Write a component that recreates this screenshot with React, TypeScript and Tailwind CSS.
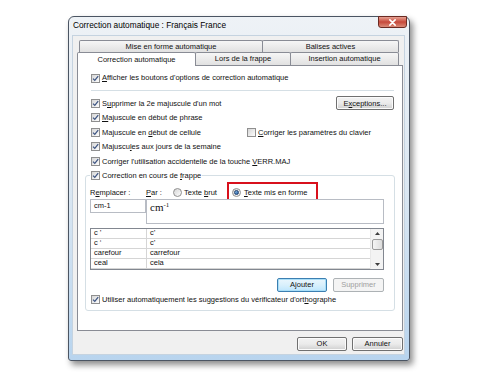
import React from "react";

const U = ({ children }: { children: React.ReactNode }) => (
  <span className="underline decoration-[0.5px] underline-offset-[1px]">{children}</span>
);

function Box({ checked = true }: { checked?: boolean }) {
  return (
    <span className="flex h-[9px] w-[9px] shrink-0 items-center justify-center border border-[#8f8f8f] bg-gradient-to-br from-[#d6d6d6] to-[#fdfdfd]">
      {checked && (
        <svg viewBox="0 0 7 7" className="h-[7px] w-[7px]">
          <path d="M1 3.6 L2.8 5.4 L6.2 1.2" stroke="#3f5683" strokeWidth="1.3" fill="none" />
        </svg>
      )}
    </span>
  );
}

function Check({ checked = true, children }: { checked?: boolean; children: React.ReactNode }) {
  return (
    <span className="flex items-center gap-[2px] whitespace-nowrap">
      <Box checked={checked} />
      <span>{children}</span>
    </span>
  );
}

function Radio({ on = false }: { on?: boolean }) {
  return (
    <span className="flex h-[9px] w-[9px] shrink-0 items-center justify-center rounded-full border border-[#8f8f8f] bg-gradient-to-br from-[#d6d6d6] to-[#fdfdfd]">
      {on && <span className="h-[5px] w-[5px] rounded-full border border-[#1d3f70] bg-gradient-to-br from-[#8fc0ea] to-[#1f5c9e]" />}
    </span>
  );
}

function Btn({
  children,
  w,
  kind = "normal",
}: {
  children: React.ReactNode;
  w: string;
  kind?: "normal" | "default" | "disabled";
}) {
  const base = "flex h-[14px] items-center justify-center rounded-[2px] border";
  const cls =
    kind === "default"
      ? "border-[#3c7fb1] bg-gradient-to-b from-[#eaf6fd] via-[#d9f0fc] to-[#bee6fd] shadow-[inset_0_0_0_1px_#a8def8]"
      : kind === "disabled"
      ? "border-[#adb2b5] bg-[#f4f4f4] text-[#a0a0a0]"
      : "border-[#707070] bg-gradient-to-b from-[#f2f2f2] via-[#ebebeb] to-[#cfcfcf] shadow-[inset_0_0_0_1px_#fbfbfb]";
  return <div className={`${base} ${cls} ${w}`}>{children}</div>;
}

function Tab({ children, w, selected = false, h }: { children: React.ReactNode; w: string; selected?: boolean; h: string }) {
  return (
    <div
      className={`-ml-px flex shrink-0 items-center justify-center rounded-t-[2px] border border-b-0 border-[#898c95] first:ml-0 ${w} ${h} ${
        selected ? "relative z-10 bg-white" : "bg-gradient-to-b from-[#f6f6f6] to-[#e1e1e1]"
      }`}
    >
      {children}
    </div>
  );
}

const rows: [string, string][] = [
  ["c \u2019", "c\u2019"],
  ["c \u2018", "c\u2019"],
  ["carefour", "carrefour"],
  ["ceal", "cela"],
];

export default function App() {
  return (
    <div className="h-[375px] w-[500px] bg-white pl-[68px] pt-[16px] font-['Segoe_UI','Liberation_Sans',Arial,sans-serif] text-[7.5px] leading-none text-[#111]">
      <div className="flex h-[345px] w-[342px] flex-col rounded-t-[6px] rounded-b-[3px] border border-[#4b5563] bg-gradient-to-b from-[#eef2f6] via-[#dbe7f2] to-[#b8d4ee] shadow-[3px_4px_6px_rgba(0,0,0,0.45)]">
        {/* title bar */}
        <div className="flex h-[18px] items-start justify-between pl-[4px] pr-[2px]">
          <span className="mt-[4px] text-[8.3px] text-[#000]">Correction automatique : Français France</span>
          <div className="-mt-px flex h-[12px] w-[29px] items-center justify-center rounded-b-[3px] border border-[#6a2a22] bg-gradient-to-b from-[#e6a193] via-[#c5473a] to-[#d98a78]">
            <svg viewBox="0 0 10 8" className="h-[7px] w-[9px]">
              <path d="M2 1 L8 7 M8 1 L2 7" stroke="#fff" strokeWidth="1.8" strokeLinecap="round" />
            </svg>
          </div>
        </div>

        {/* client */}
        <div className="ml-[3px] flex h-[320px] w-[333px] flex-col border border-[#c5d3e0] bg-[#f0f0f0]">
          <div className="ml-[4px] mt-[4px] w-[326px]">
            <div className="flex h-[12px] pl-[2px]">
              <Tab w="w-[184px]" h="h-[12px]">Mise en forme automatique</Tab>
              <Tab w="w-[137px]" h="h-[12px]">Balises actives</Tab>
            </div>
            <div className="flex h-[13px] items-start">
              <Tab w="w-[119px]" h="h-[14px]" selected>
                Correction automatique
              </Tab>
              <Tab w="w-[96px]" h="h-[13px]">Lors de la frappe</Tab>
              <Tab w="w-[109px]" h="h-[13px]">Insertion automatique</Tab>
            </div>

            {/* panel */}
            <div className="h-[266px] border border-[#898c95] bg-white pl-[13px] pt-[5px]">
              <div className="flex h-[14px] items-center">
                <Check>
                  <U>A</U>fficher les boutons d'options de correction automatique
                </Check>
              </div>
              <div className="mt-[5px] h-px w-[303px] bg-[#d5dfe5]" />
              <div className="mt-[5px]">
                <div className="flex h-[14.5px] w-[303px] items-center justify-between">
                  <Check>
                    S<U>u</U>pprimer la 2e majuscule d'un mot
                  </Check>
                  <Btn w="w-[58px]">
                    E<U>x</U>ceptions...
                  </Btn>
                </div>
                <div className="flex h-[14.5px] items-center">
                  <Check>
                    <U>M</U>ajuscule en début de phrase
                  </Check>
                </div>
                <div className="flex h-[14.5px] items-center">
                  <div className="w-[156px] shrink-0">
                    <Check>
                      Majuscule en <U>d</U>ébut de cellule
                    </Check>
                  </div>
                  <Check checked={false}>
                    <U>C</U>orriger les paramètres du clavier
                  </Check>
                </div>
                <div className="flex h-[14.5px] items-center">
                  <Check>
                    Majuscu<U>l</U>es aux jours de la semaine
                  </Check>
                </div>
                <div className="flex h-[14.5px] items-center">
                  <Check>
                    Corriger l'utilisation accidentelle de la touche <U>V</U>ERR.MAJ
                  </Check>
                </div>
              </div>

              <fieldset className="-ml-[6px] h-[142px] w-[310px] rounded-[3px] border border-[#d5dfe5] pl-[4px]">
                <legend className="flex h-[14px] items-center px-[1px]">
                  <Check>
                    Correction en cours de <U>f</U>rappe
                  </Check>
                </legend>

                <div className="mt-[4px] flex h-[12px] items-center">
                  <span className="w-[56px] shrink-0">
                    R<U>e</U>mplacer :
                  </span>
                  <span className="w-[27px] shrink-0">
                    <U>P</U>ar :
                  </span>
                  <span className="flex w-[54px] shrink-0 items-center gap-[2px]">
                    <Radio />
                    <span>
                      Texte <U>b</U>rut
                    </span>
                  </span>
                  <span className="flex h-[21px] w-[91px] shrink-0 items-center gap-[3px] border-2 border-[#d8101c] pl-[3px]">
                    <Radio on />
                    <span>
                      <U>T</U>exte mis en forme
                    </span>
                  </span>
                </div>

                <div className="flex h-[25px] items-start">
                  <div className="flex h-[14px] w-[56px] items-center border border-[#b8bcc4] bg-white pl-[3px]">cm-1</div>
                  <div className="ml-0 h-[25px] w-[238px] border border-[#b8bcc4] bg-white pl-[3px] pt-[2px] font-['Liberation_Serif',serif] text-[11px]">
                    cm<sup className="text-[7px]">-1</sup>
                  </div>
                </div>

                <div className="mt-[4px] flex h-[42px] w-[294px] border border-[#828790] bg-white">
                  <div className="flex flex-1 flex-col">
                    {rows.map(([a, b]) => (
                      <div key={a} className="flex h-[10px] border-b border-[#d5d5d5]">
                        <span className="flex w-[56px] shrink-0 items-center border-r border-[#d5d5d5] pl-[3px]">{a}</span>
                        <span className="flex items-center pl-[3px]">{b}</span>
                      </div>
                    ))}
                  </div>
                  <div className="flex w-[13px] flex-col items-center border-l border-[#e8e8e8] bg-[#f3f3f3]">
                    <svg viewBox="0 0 7 4" className="mt-[3px] h-[3px] w-[5px]">
                      <path d="M0 4 L3.5 0 L7 4 Z" fill="#3d3d3d" />
                    </svg>
                    <div className="mt-[4px] h-[11px] w-[11px] rounded-[2px] border border-[#9a9a9a] bg-gradient-to-r from-[#f4f4f4] to-[#dcdcdc]" />
                    <svg viewBox="0 0 7 4" className="mt-auto mb-[3px] h-[3px] w-[5px]">
                      <path d="M0 0 L3.5 4 L7 0 Z" fill="#3d3d3d" />
                    </svg>
                  </div>
                </div>

                <div className="mt-[8px] flex w-[294px] justify-end gap-[6px]">
                  <Btn w="w-[50px]" kind="default">
                    A<U>j</U>outer
                  </Btn>
                  <Btn w="w-[51px]" kind="disabled">
                    Supprimer
                  </Btn>
                </div>

                <div className="mt-[2px] flex h-[12px] items-center pl-[1px]">
                  <Check>
                    Utiliser automatiquement les suggestions du vérificateur d'ort<U>h</U>ographe
                  </Check>
                </div>
              </fieldset>
            </div>
          </div>

          <div className="mt-[6px] flex justify-end gap-[5px] pr-[1px]">
            <Btn w="w-[50px]">OK</Btn>
            <Btn w="w-[51px]">Annuler</Btn>
          </div>
        </div>
      </div>
    </div>
  );
}
